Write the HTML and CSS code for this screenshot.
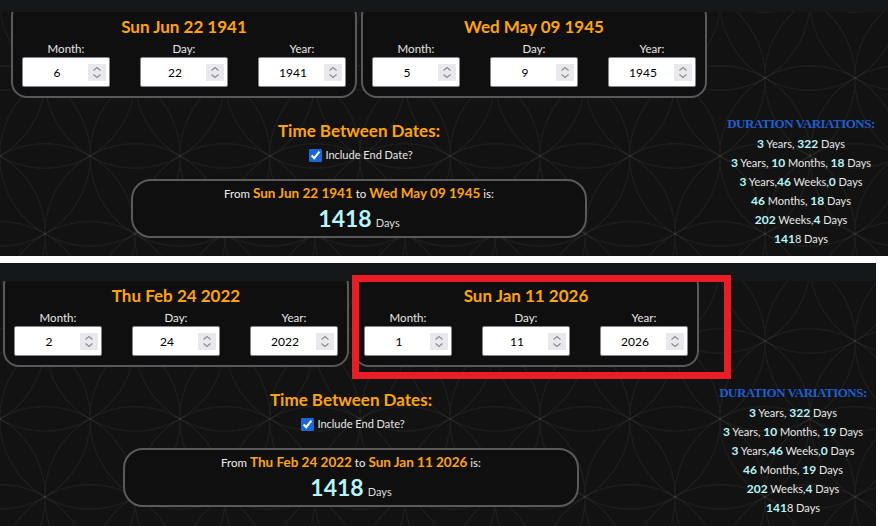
FILE: index.html
```html
<!DOCTYPE html>
<html lang="en">
<head>
<meta charset="utf-8">
<title>Time Between Dates</title>
<link rel="stylesheet" href="styles.css">
</head>
<body>

<section class="shot shot-a">
  <div class="topbar"></div>
  <div class="content">
    <div class="main">
      <div class="cards">
        <div class="card">
          <h2 class="card-title">Sun Jun 22 1941</h2>
          <div class="fields">
            <div class="field"><span class="lbl">Month:</span><div class="num"><span class="val">6</span><span class="spin"><svg width="18" height="17" viewBox="0 0 18 17"><path d="M5.5 6.5 9 3.5l3.5 3M5.5 10.5 9 13.5l3.5-3" fill="none" stroke="#8a8a90" stroke-width="1.2"/></svg></span></div></div>
            <div class="field"><span class="lbl">Day:</span><div class="num"><span class="val">22</span><span class="spin"><svg width="18" height="17" viewBox="0 0 18 17"><path d="M5.5 6.5 9 3.5l3.5 3M5.5 10.5 9 13.5l3.5-3" fill="none" stroke="#8a8a90" stroke-width="1.2"/></svg></span></div></div>
            <div class="field"><span class="lbl">Year:</span><div class="num"><span class="val">1941</span><span class="spin"><svg width="18" height="17" viewBox="0 0 18 17"><path d="M5.5 6.5 9 3.5l3.5 3M5.5 10.5 9 13.5l3.5-3" fill="none" stroke="#8a8a90" stroke-width="1.2"/></svg></span></div></div>
          </div>
        </div>
        <div class="card">
          <h2 class="card-title">Wed May 09 1945</h2>
          <div class="fields">
            <div class="field"><span class="lbl">Month:</span><div class="num"><span class="val">5</span><span class="spin"><svg width="18" height="17" viewBox="0 0 18 17"><path d="M5.5 6.5 9 3.5l3.5 3M5.5 10.5 9 13.5l3.5-3" fill="none" stroke="#8a8a90" stroke-width="1.2"/></svg></span></div></div>
            <div class="field"><span class="lbl">Day:</span><div class="num"><span class="val">9</span><span class="spin"><svg width="18" height="17" viewBox="0 0 18 17"><path d="M5.5 6.5 9 3.5l3.5 3M5.5 10.5 9 13.5l3.5-3" fill="none" stroke="#8a8a90" stroke-width="1.2"/></svg></span></div></div>
            <div class="field"><span class="lbl">Year:</span><div class="num"><span class="val">1945</span><span class="spin"><svg width="18" height="17" viewBox="0 0 18 17"><path d="M5.5 6.5 9 3.5l3.5 3M5.5 10.5 9 13.5l3.5-3" fill="none" stroke="#8a8a90" stroke-width="1.2"/></svg></span></div></div>
          </div>
        </div>
      </div>
      <h3 class="tbd">Time Between Dates:</h3>
      <label class="check"><input type="checkbox" checked> Include End Date?</label>
      <div class="result">
        <p class="from">From <b>Sun Jun 22 1941</b> to <b>Wed May 09 1945</b> is:</p>
        <p class="total"><span class="big">1418</span> <span class="unit">Days</span></p>
      </div>
    </div>
    <aside class="dur">
      <h4 class="dur-title">DURATION VARIATIONS:</h4>
      <p><b>3</b> Years, <b>322</b> Days</p>
      <p><b>3</b> Years, <b>10</b> Months, <b>18</b> Days</p>
      <p><b>3</b> Years,<b>46</b> Weeks,<b>0</b> Days</p>
      <p><b>46</b> Months, <b>18</b> Days</p>
      <p><b>202</b> Weeks,<b>4</b> Days</p>
      <p><b>141</b>8 Days</p>
    </aside>
  </div>
</section>

<section class="shot shot-b">
  <div class="topbar"></div>
  <div class="content">
    <div class="main">
      <div class="cards">
        <div class="card">
          <h2 class="card-title">Thu Feb 24 2022</h2>
          <div class="fields">
            <div class="field"><span class="lbl">Month:</span><div class="num"><span class="val">2</span><span class="spin"><svg width="18" height="17" viewBox="0 0 18 17"><path d="M5.5 6.5 9 3.5l3.5 3M5.5 10.5 9 13.5l3.5-3" fill="none" stroke="#8a8a90" stroke-width="1.2"/></svg></span></div></div>
            <div class="field"><span class="lbl">Day:</span><div class="num"><span class="val">24</span><span class="spin"><svg width="18" height="17" viewBox="0 0 18 17"><path d="M5.5 6.5 9 3.5l3.5 3M5.5 10.5 9 13.5l3.5-3" fill="none" stroke="#8a8a90" stroke-width="1.2"/></svg></span></div></div>
            <div class="field"><span class="lbl">Year:</span><div class="num"><span class="val">2022</span><span class="spin"><svg width="18" height="17" viewBox="0 0 18 17"><path d="M5.5 6.5 9 3.5l3.5 3M5.5 10.5 9 13.5l3.5-3" fill="none" stroke="#8a8a90" stroke-width="1.2"/></svg></span></div></div>
          </div>
        </div>
        <div class="card">
          <h2 class="card-title">Sun Jan 11 2026</h2>
          <div class="fields">
            <div class="field"><span class="lbl">Month:</span><div class="num"><span class="val">1</span><span class="spin"><svg width="18" height="17" viewBox="0 0 18 17"><path d="M5.5 6.5 9 3.5l3.5 3M5.5 10.5 9 13.5l3.5-3" fill="none" stroke="#8a8a90" stroke-width="1.2"/></svg></span></div></div>
            <div class="field"><span class="lbl">Day:</span><div class="num"><span class="val">11</span><span class="spin"><svg width="18" height="17" viewBox="0 0 18 17"><path d="M5.5 6.5 9 3.5l3.5 3M5.5 10.5 9 13.5l3.5-3" fill="none" stroke="#8a8a90" stroke-width="1.2"/></svg></span></div></div>
            <div class="field"><span class="lbl">Year:</span><div class="num"><span class="val">2026</span><span class="spin"><svg width="18" height="17" viewBox="0 0 18 17"><path d="M5.5 6.5 9 3.5l3.5 3M5.5 10.5 9 13.5l3.5-3" fill="none" stroke="#8a8a90" stroke-width="1.2"/></svg></span></div></div>
          </div>
        </div>
      </div>
      <h3 class="tbd">Time Between Dates:</h3>
      <label class="check"><input type="checkbox" checked> Include End Date?</label>
      <div class="result">
        <p class="from">From <b>Thu Feb 24 2022</b> to <b>Sun Jan 11 2026</b> is:</p>
        <p class="total"><span class="big">1418</span> <span class="unit">Days</span></p>
      </div>
    </div>
    <aside class="dur">
      <h4 class="dur-title">DURATION VARIATIONS:</h4>
      <p><b>3</b> Years, <b>322</b> Days</p>
      <p><b>3</b> Years, <b>10</b> Months, <b>19</b> Days</p>
      <p><b>3</b> Years,<b>46</b> Weeks,<b>0</b> Days</p>
      <p><b>46</b> Months, <b>19</b> Days</p>
      <p><b>202</b> Weeks,<b>4</b> Days</p>
      <p><b>141</b>8 Days</p>
    </aside>
  </div>
  <div class="highlight"></div>
</section>

</body>
</html>
```

FILE: styles.css
```css
* { box-sizing: border-box; }

body {
  margin: 0;
  background: #ffffff;
  font-family: Lato, "Noto Sans", sans-serif;
}

.shot {
  position: relative;
  overflow: hidden;
  background-color: #121212;
  background-image:
    radial-gradient(circle at center, transparent 89.2px, rgba(255,255,255,0.045) 89.7px, rgba(255,255,255,0.045) 90.6px, transparent 91.1px),
    radial-gradient(circle at center, transparent 89.2px, rgba(255,255,255,0.045) 89.7px, rgba(255,255,255,0.045) 90.6px, transparent 91.1px),
    radial-gradient(circle at center, transparent 89.2px, rgba(255,255,255,0.045) 89.7px, rgba(255,255,255,0.045) 90.6px, transparent 91.1px),
    radial-gradient(circle at center, transparent 89.2px, rgba(255,255,255,0.045) 89.7px, rgba(255,255,255,0.045) 90.6px, transparent 91.1px),
    radial-gradient(circle at center, transparent 89.2px, rgba(255,255,255,0.045) 89.7px, rgba(255,255,255,0.045) 90.6px, transparent 91.1px),
    radial-gradient(circle at center, transparent 89.2px, rgba(255,255,255,0.045) 89.7px, rgba(255,255,255,0.045) 90.6px, transparent 91.1px),
    radial-gradient(circle at center, transparent 89.2px, rgba(255,255,255,0.045) 89.7px, rgba(255,255,255,0.045) 90.6px, transparent 91.1px),
    radial-gradient(circle at center, transparent 89.2px, rgba(255,255,255,0.045) 89.7px, rgba(255,255,255,0.045) 90.6px, transparent 91.1px);
  background-size: 180px 311.77px;
  background-position:
    -90px -155.88px,
    0px -155.88px,
    -45px -77.94px,
    45px -77.94px,
    -90px 0px,
    0px 0px,
    -45px 77.94px,
    45px 77.94px;
}

.shot-a { width: 888px; height: 256px; }
.shot-b { width: 876px; height: 263px; margin-top: 7px; }

.topbar {
  position: relative;
  z-index: 2;
  background: #161719;
}
.shot-a .topbar { height: 12px; }
.shot-b .topbar { height: 18px; }

.content {
  display: flex;
  gap: 7px;
}
.shot-a .content { padding-left: 11px; }
.shot-b .content { padding-left: 3px; }

.main {
  width: 696px;
  flex: none;
  display: flex;
  flex-direction: column;
  align-items: center;
}

.cards {
  display: flex;
  gap: 4px;
  margin-top: -12px;
}

.card {
  width: 346px;
  height: 98px;
  border: 2px solid #59595b;
  border-radius: 16px;
  background: #0f0f0f;
  padding: 15px 9px 0;
}

.card-title {
  margin: 0;
  font-size: 17px;
  line-height: 20px;
  font-weight: 700;
  color: #ffa500;
  text-align: center;
}

.fields {
  display: grid;
  grid-template-columns: repeat(3, 88px);
  column-gap: 30px;
  margin-top: 4px;
}

.lbl {
  display: block;
  text-align: center;
  font-size: 11.5px;
  line-height: 16px;
  color: #e6e6e6;
}

.num {
  height: 30px;
  background: #ffffff;
  border: 1px solid #85858f;
  border-radius: 2px;
  display: flex;
  align-items: center;
}

.val {
  flex: 1;
  text-align: center;
  padding-left: 3px;
  font-size: 12px;
  color: #000000;
}

.spin {
  flex: none;
  width: 18px;
  height: 17px;
  margin-right: 3px;
  background: #e9e9ed;
  display: flex;
}

.tbd {
  margin: 22px 0 0;
  font-size: 17px;
  line-height: 22px;
  font-weight: 700;
  color: #ffa500;
}

.check {
  margin-top: 5px;
  display: flex;
  align-items: center;
  gap: 3px;
  font-size: 11px;
  line-height: 16px;
  color: #e6e6e6;
}

.check input {
  margin: 0 0 0 4px;
  width: 13px;
  height: 13px;
  accent-color: #1668dc;
}

.result {
  margin-top: 16px;
  width: 456px;
  height: 59px;
  border: 2px solid #5a5a5a;
  border-radius: 20px;
  background: #0f0f0f;
  text-align: center;
  padding-top: 3px;
}

.from {
  margin: 0;
  font-size: 11.5px;
  line-height: 18px;
  color: #eeeeee;
}

.from b {
  font-size: 13.5px;
  color: #ffa500;
}

.total {
  margin: 0;
  line-height: 30px;
}

.big {
  font-size: 23px;
  font-weight: 700;
  color: #b6f6fb;
}

.unit {
  font-size: 11px;
  color: #dddddd;
}

.dur {
  width: 174px;
  flex: none;
  padding-top: 104px;
  text-align: center;
}

.dur-title {
  margin: 0 0 2px;
  font-family: "Liberation Serif", "Times New Roman", serif;
  font-weight: 700;
  font-size: 13px;
  letter-spacing: -0.5px;
  line-height: 16px;
  color: #1f5fd0;
}

.dur p {
  margin: 0;
  font-size: 11px;
  line-height: 19px;
  color: #e8e8e8;
  white-space: nowrap;
}

.dur b {
  font-size: 12px;
  color: #b6f6fb;
}

.highlight {
  position: absolute;
  left: 352px;
  top: 12px;
  width: 379px;
  height: 104px;
  border: 7px solid #ec1c24;
  z-index: 3;
}
```
